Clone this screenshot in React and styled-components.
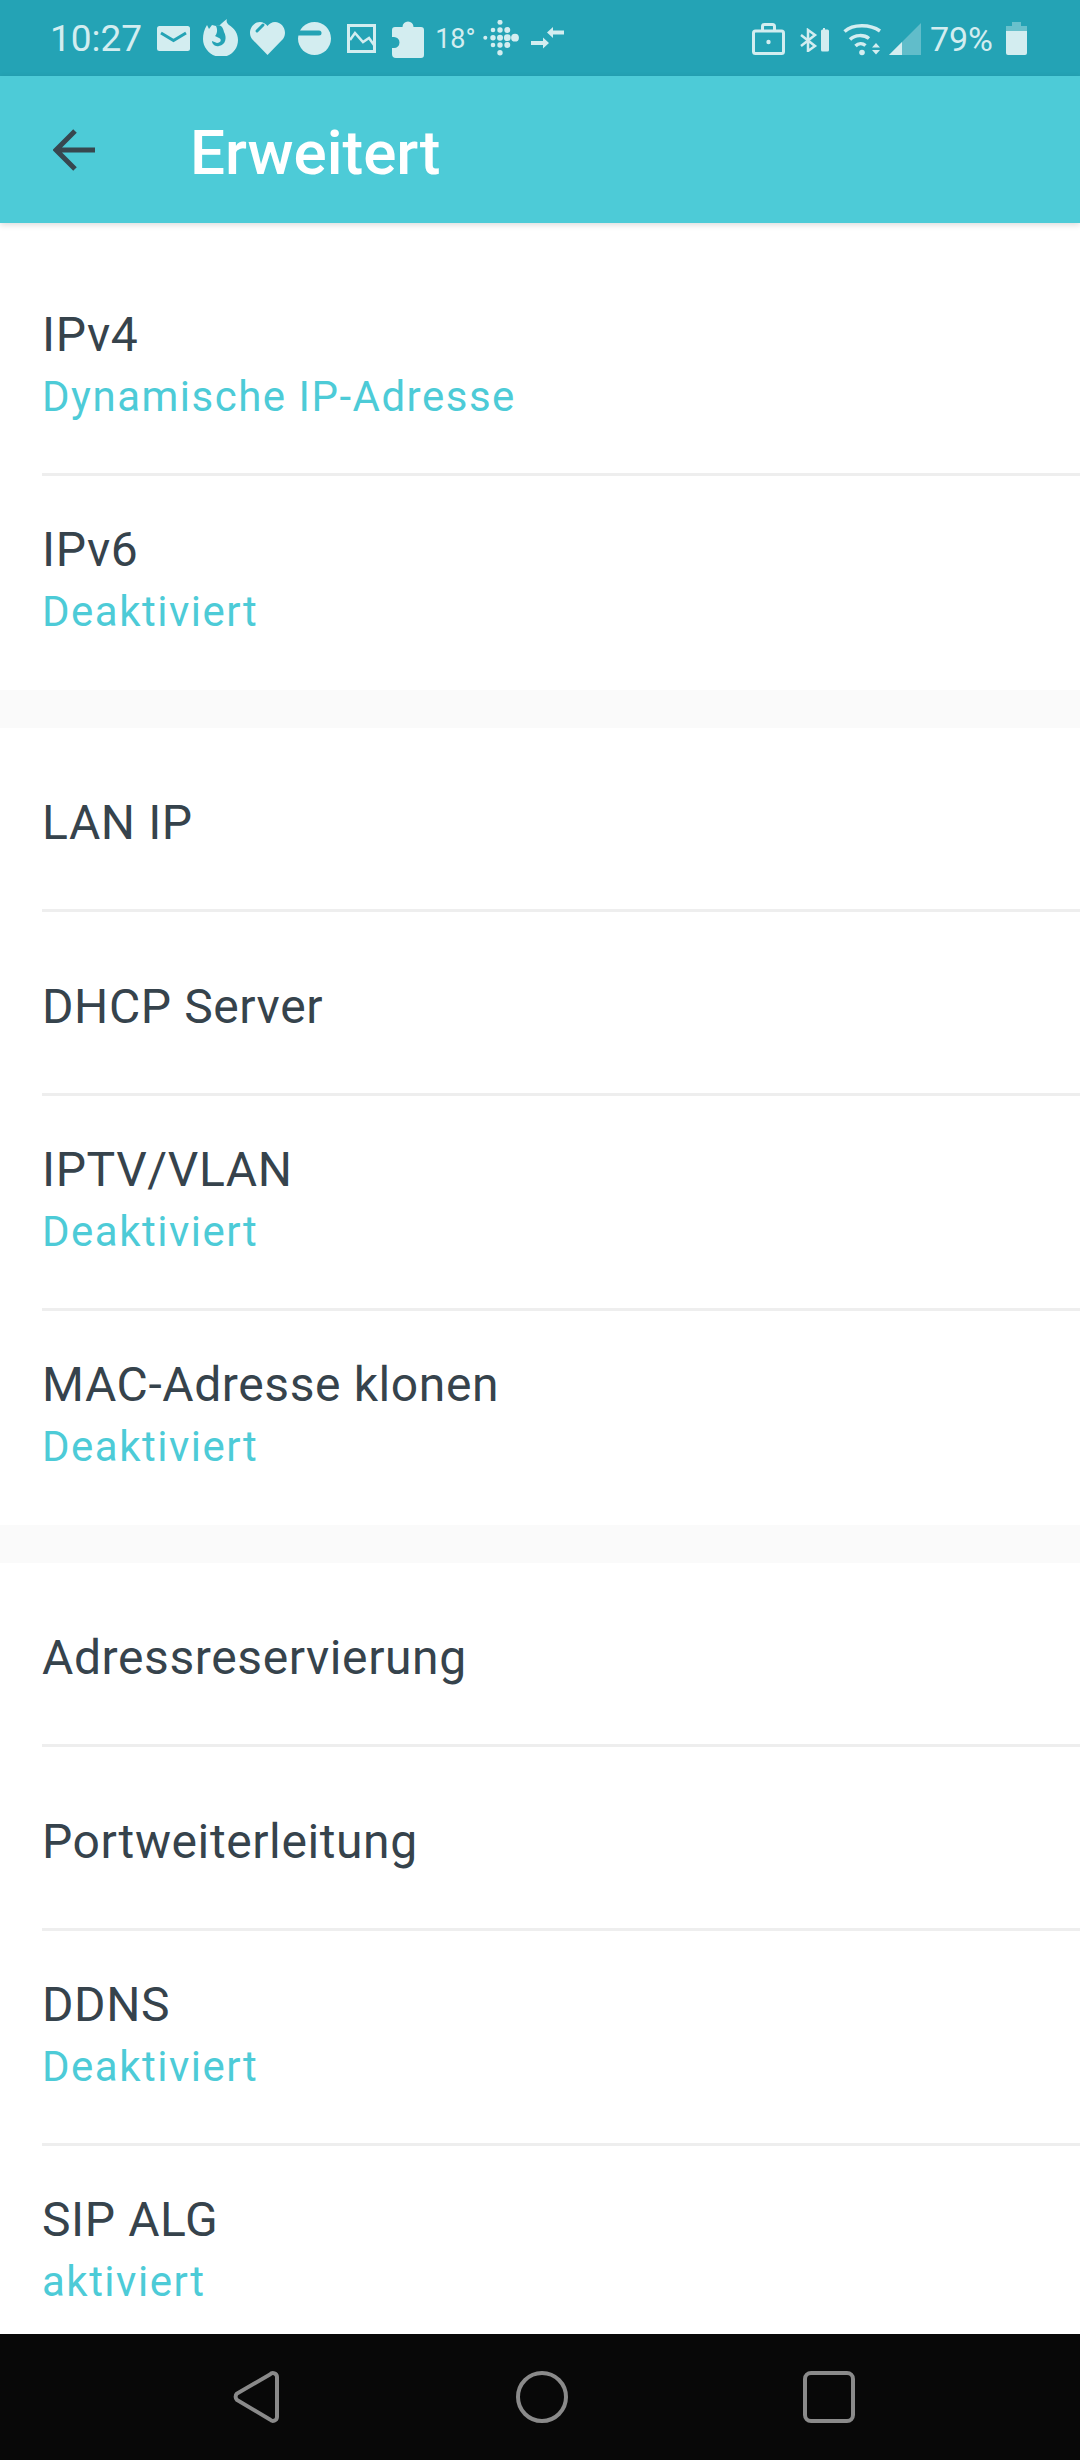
import React from 'react';
import styled, { createGlobalStyle } from 'styled-components';

const BAR = '#24a3b5';
const ICON = '#d3edf0';

const GlobalStyle = createGlobalStyle`
  html, body {
    margin: 0;
    padding: 0;
    background: #fff;
  }
  body {
    font-family: Roboto, "Liberation Sans", sans-serif;
  }
`;

const Page = styled.div`
  display: flex;
  flex-direction: column;
  width: 1080px;
  height: 2460px;
  overflow: hidden;
`;

const StatusBar = styled.div`
  display: flex;
  flex: none;
  justify-content: space-between;
  align-items: flex-start;
  height: 76px;
  padding: 0 53px 0 50px;
  box-sizing: border-box;
  background: ${BAR};
  color: ${ICON};
`;

const StatusGroup = styled.div`
  display: flex;
  align-items: flex-start;
`;

const StatusText = styled.span`
  font-size: ${(p) => p.$size}px;
  line-height: 78px;
  margin-left: ${(p) => p.$gap || 0}px;
`;

const StatusIcon = styled.svg`
  display: block;
  flex: none;
  margin-left: ${(p) => p.$gap}px;
  margin-top: ${(p) => p.$top}px;
  fill: ${ICON};
`;

const Header = styled.header`
  position: relative;
  z-index: 1;
  display: flex;
  flex: none;
  align-items: center;
  height: 147px;
  padding-left: 53px;
  box-sizing: border-box;
  background: #4dcbd7;
  box-shadow: 0 2px 6px rgba(0, 0, 0, 0.14);
`;

const BackIcon = styled.svg`
  display: block;
  flex: none;
  fill: none;
  stroke: #37474f;
  stroke-width: 5;
`;

const Title = styled.h1`
  margin: 5px 0 0 95px;
  font-size: 62px;
  font-weight: 500;
  color: #fff;
`;

const List = styled.main`
  flex: 1;
  min-height: 0;
  overflow: hidden;
  background: #fff;
`;

const Section = styled.section`
  padding-top: ${(p) => p.$top}px;
  border-bottom: ${(p) => (p.$last ? 'none' : '38px solid #fafafa')};
`;

const Row = styled.div`
  display: flex;
  flex-direction: column;
  justify-content: center;
  height: ${(p) => (p.$sub ? (p.$end ? 214 : 215) : 184)}px;
  padding: ${(p) => (p.$sub ? '0 0 3px' : '9px 0 0')};
  box-sizing: border-box;
  margin-left: 42px;
  border-bottom: 3px solid ${(p) => (p.$end ? 'transparent' : '#eeeeee')};
`;

const RowTitle = styled.div`
  font-size: 48px;
  line-height: 62px;
  letter-spacing: 0.6px;
  color: #36434c;
`;

const RowValue = styled.div`
  font-size: 42px;
  line-height: 61px;
  letter-spacing: 1.5px;
  color: #4dcbd7;
`;

const NavBar = styled.nav`
  display: flex;
  flex: none;
  align-items: center;
  height: 126px;
  padding: 0 225px 0 232px;
  box-sizing: border-box;
  justify-content: space-between;
  background: #080808;
`;

const NavIcon = styled.svg`
  display: block;
  fill: none;
  stroke: #8a8a8a;
  stroke-width: 4;
`;

const sections = [
  {
    top: 38,
    rows: [
      { title: 'IPv4', value: 'Dynamische IP-Adresse' },
      { title: 'IPv6', value: 'Deaktiviert' },
    ],
  },
  {
    top: 0,
    rows: [
      { title: 'LAN IP' },
      { title: 'DHCP Server' },
      { title: 'IPTV/VLAN', value: 'Deaktiviert' },
      { title: 'MAC-Adresse klonen', value: 'Deaktiviert' },
    ],
  },
  {
    top: 0,
    rows: [
      { title: 'Adressreservierung' },
      { title: 'Portweiterleitung' },
      { title: 'DDNS', value: 'Deaktiviert' },
      { title: 'SIP ALG', value: 'aktiviert' },
    ],
  },
];

const fitbitDots = [
  [17, 2.3, 2.5],
  [10, 10, 2.3],
  [17, 10, 2.7],
  [24.3, 10, 3],
  [2.3, 17.7, 2],
  [10, 17.7, 2.7],
  [17, 17.7, 3],
  [24.3, 17.7, 3.4],
  [32, 17.7, 3.9],
  [10, 25, 2.3],
  [17, 25, 2.7],
  [24.3, 25, 3],
  [17, 32.7, 2.7],
];

const App = () => (
  <Page>
    <GlobalStyle />
    <StatusBar>
      <StatusGroup>
        <StatusText $size={37}>10:27</StatusText>
        {/* mail */}
        <StatusIcon $gap={15} $top={26} width="33" height="25" viewBox="0 0 33 25">
          <rect width="33" height="25" rx="2.5" />
          <path d="M4 7l12.5 7.5L29 7" fill="none" stroke={BAR} strokeWidth="3" />
        </StatusIcon>
        {/* firefox */}
        <StatusIcon $gap={13} $top={19} width="36" height="37" viewBox="0 0 36 37">
          <path d="M0 20C0 15 1 11 4 6l2 4 3-4 4 1c2 0 3-1 4-1 1-1 3-3 7-6-1 3 0 4 2 6 5 3 9 8 9 15 0 10-8 17-17 17S0 30 0 20z" />
          <path d="M13 7c4-2 7 1 8 6 3 5 2 13-5 14-4 1-7-2-7-5l5 2c4 0 5-4 2-5l-4-2c2-2 3-6 1-10z" fill={BAR} />
        </StatusIcon>
        {/* heart */}
        <StatusIcon $gap={10} $top={22} width="37" height="33" viewBox="0 0 37 33">
          <path d="M18.5 33L3 17C-2 10 3 0 11 0c3 0 6 2 7.5 4C20 2 23 0 26 0c8 0 13 10 8 17z" />
          <path d="M14 3L8 9" fill="none" stroke={BAR} strokeWidth="3" strokeLinecap="round" />
        </StatusIcon>
        {/* half circle */}
        <StatusIcon $gap={12} $top={22} width="33" height="33" viewBox="0 0 33 33">
          <circle cx="16.5" cy="16.5" r="16.5" />
          <path d="M-2 11h23" fill="none" stroke={BAR} strokeWidth="5" strokeLinecap="round" />
        </StatusIcon>
        {/* picture */}
        <StatusIcon $gap={16} $top={24} width="29" height="29" viewBox="0 0 29 29">
          <rect x="1.5" y="1.5" width="26" height="26" fill="none" stroke={ICON} strokeWidth="3" />
          <path d="M3 16l5-7 8 9 6-4 5 7" fill="none" stroke={ICON} strokeWidth="2.5" />
        </StatusIcon>
        {/* puzzle */}
        <StatusIcon $gap={16} $top={20} width="32" height="38" viewBox="0 0 32 38">
          <path d="M3 7h7.500a5.500 5.500 0 0 1 11 0H29a3 3 0 0 1 3 3v25a3 3 0 0 1-3 3H4a4 4 0 0 1-4-4v-6h2a5.500 5.500 0 0 0 0-11H0v-7a3 3 0 0 1 3-3z" />
        </StatusIcon>
        <StatusText $size={27} $gap={11}>18°</StatusText>
        {/* fitbit */}
        <StatusIcon $gap={7} $top={20} width="36" height="37" viewBox="0 0 36 37">
          {fitbitDots.map(([cx, cy, r]) => (
            <circle key={`${cx}-${cy}`} cx={cx} cy={cy} r={r} />
          ))}
        </StatusIcon>
        {/* arrows */}
        <StatusIcon $gap={12} $top={27} width="33" height="22" viewBox="0 0 33 22">
          <path d="M16 5.500L22 0v3.500h11v4H22V11zM18 16l-6-5.500V14H0v4h12v3.500z" />
        </StatusIcon>
      </StatusGroup>
      <StatusGroup>
        {/* briefcase */}
        <StatusIcon $gap={0} $top={23} width="33" height="32" viewBox="0 0 33 32">
          <rect x="1.500" y="8" width="30" height="22.500" rx="2" fill="none" stroke={ICON} strokeWidth="3" />
          <path d="M10.500 8V3.500a2 2 0 0 1 2-2h8a2 2 0 0 1 2 2V8" fill="none" stroke={ICON} strokeWidth="3" />
          <circle cx="16.500" cy="19" r="2.200" />
        </StatusIcon>
        {/* bluetooth + its battery */}
        <StatusIcon $gap={15} $top={28} width="29" height="24" viewBox="0 0 29 24">
          <path d="M1 7l14 11-7 5V2l7 5L1 18" fill="none" stroke={ICON} strokeWidth="2.500" />
          <path d="M23 0h2v1.500h2.500a1.500 1.500 0 0 1 1.500 1.500v19a1.500 1.500 0 0 1-1.500 1.500h-5a1.500 1.500 0 0 1-1.500-1.500V3a1.500 1.500 0 0 1 1.500-1.500H23z" />
        </StatusIcon>
        {/* wifi */}
        <StatusIcon $gap={14} $top={23} width="38" height="33" viewBox="0 0 38 33">
          <path d="M1.500 8.500C10 1 27 1 37 8" fill="none" stroke={ICON} strokeWidth="3.500" />
          <path d="M7 16.500c5-5 14-5 19-1M12.500 23c3-3 7-3 10-.5" fill="none" stroke={ICON} strokeWidth="3.500" />
          <circle cx="19" cy="29.500" r="2.800" />
          <path d="M33 20l4 4.500h-8zM29 27h8l-4 4.500z" />
        </StatusIcon>
        {/* signal */}
        <StatusIcon $gap={8} $top={23} width="32" height="32" viewBox="0 0 32 32">
          <path d="M0 32L32 0v32z" opacity="0.35" />
          <path d="M0 32l13-13v13z" />
        </StatusIcon>
        <StatusText $size={34} $gap={9}>79%</StatusText>
        {/* battery */}
        <StatusIcon $gap={13} $top={22} width="21" height="33" viewBox="0 0 21 33">
          <path d="M6 0h9v4h6v5H0V4h6z" opacity="0.4" />
          <path d="M0 9h21v22a2 2 0 0 1-2 2H2a2 2 0 0 1-2-2z" />
        </StatusIcon>
      </StatusGroup>
    </StatusBar>
    <Header>
      <BackIcon width="42" height="44" viewBox="0 0 42 44">
        <path d="M42 22H4M22 3L3 22l19 19" />
      </BackIcon>
      <Title>Erweitert</Title>
    </Header>
    <List>
      {sections.map((section, i) => (
        <Section key={section.rows[0].title} $top={section.top} $last={i === sections.length - 1}>
          {section.rows.map((row, j) => (
            <Row key={row.title} $sub={!!row.value} $end={j === section.rows.length - 1}>
              <RowTitle>{row.title}</RowTitle>
              {row.value && <RowValue>{row.value}</RowValue>}
            </Row>
          ))}
        </Section>
      ))}
    </List>
    <NavBar>
      <NavIcon width="48" height="52" viewBox="0 0 48 52">
        <path d="M38 3.500a4 4 0 0 1 7 2.500v40a4 4 0 0 1-7 2.500L5 29a4.500 4.500 0 0 1 0-6.500z" />
      </NavIcon>
      <NavIcon width="52" height="52" viewBox="0 0 52 52">
        <circle cx="26" cy="26" r="24" />
      </NavIcon>
      <NavIcon width="52" height="52" viewBox="0 0 52 52">
        <rect x="2" y="2" width="48" height="48" rx="6" />
      </NavIcon>
    </NavBar>
  </Page>
);

export default App;
